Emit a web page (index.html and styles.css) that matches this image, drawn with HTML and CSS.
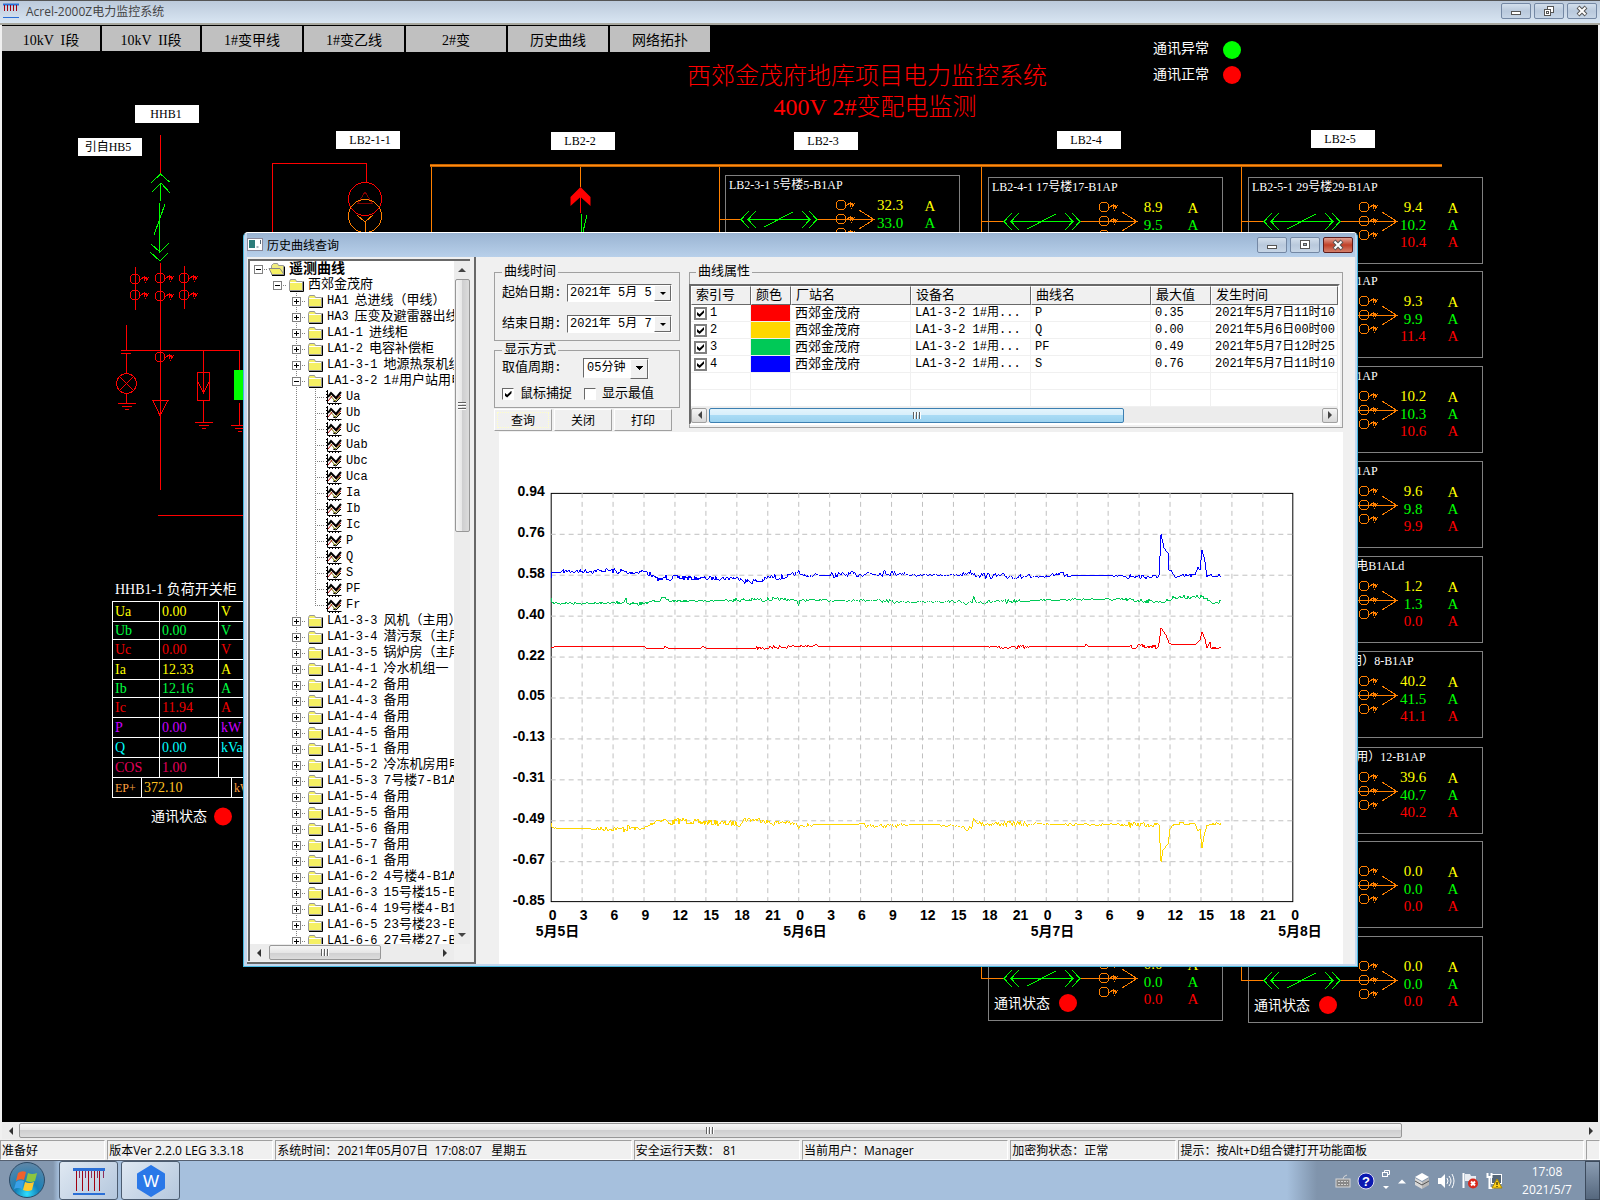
FILE: index.html
```html
<!DOCTYPE html>
<html lang="zh-CN">
<head>
  <meta charset="UTF-8" />
  <meta name="viewport" content="width=device-width, initial-scale=1.0"/>
  <title>Acrel-2000Z电力监控系统</title>
  <link rel="stylesheet" href="styles.css">
</head>
<body>

  <header class="app-title">
    <svg class="app-logo" width="18" height="16" viewBox="0 0 18 16">
      <path d="M1 1.500h16" stroke="#2a6fd6" stroke-width="2"/>
      <path d="M2.500 2v6M5.500 2v6M8.500 2v6M11.500 2v6M14.500 2v6" stroke="#a00010"/>
      <path d="M1 14.500h16" stroke="#2a6fd6"/>
    </svg>
    <span>Acrel-2000Z电力监控系统</span>
    <div class="win-buttons">
      <button aria-label="最小化"><svg width="12" height="12"><rect x="1.500" y="6.500" width="9" height="3" fill="#fff" stroke="#555"/></svg></button>
      <button aria-label="还原"><svg width="12" height="12" fill="#fff" stroke="#555"><rect x="4.500" y="1.500" width="6" height="6"/><rect x="1.500" y="4.500" width="6" height="6"/><rect x="3.500" y="6.500" width="2" height="2"/></svg></button>
      <button aria-label="关闭"><svg width="12" height="12"><path d="M2 2l8 8M10 2l-8 8" stroke="#555" stroke-width="4"/><path d="M2.500 2.500l7 7M9.500 2.500l-7 7" stroke="#fff" stroke-width="2"/></svg></button>
    </div>
  </header>

  <main class="workspace">
    <svg class="diagram" id="diagram" width="1600" height="1098" viewBox="0 25 1600 1098">
      <defs>
        <g id="ct">
          <circle r="5" fill="none"/>
          <path d="M5 1l4-3v4l2-4v4l3-4" fill="none"/>
        </g>
        <g id="ground">
          <path d="M-9 0h18M-5 3h10M-2 6h4"/>
        </g>
      </defs>

      <!-- headings -->
      <text class="big" x="867" y="84">西郊金茂府地库项目电力监控系统</text>
      <text class="big" x="875" y="115">400V 2#变配电监测</text>
      <g class="comm">
        <text x="1153" y="53">通讯异常</text>
        <circle cx="1232" cy="50" r="9" fill="#0f0"/>
        <text x="1153" y="79">通讯正常</text>
        <circle cx="1232" cy="75" r="9" fill="#f00"/>
      </g>

      <!-- white name plates -->
      <g fill="#fff">
        <rect x="135" y="105" width="64" height="18"/>
        <rect x="78" y="138" width="64" height="18"/>
        <rect x="336" y="131" width="64" height="18"/>
        <rect x="551" y="132" width="64" height="18"/>
        <rect x="794" y="132" width="64" height="18"/>
        <rect x="1057" y="131" width="64" height="18"/>
        <rect x="1311" y="130" width="64" height="18"/>
      </g>
      <g class="plate">
        <text x="166" y="118">HHB1</text>
        <text x="108" y="151">引自HB5</text>
        <text x="370" y="144">LB2-1-1</text>
        <text x="580" y="145">LB2-2</text>
        <text x="823" y="145">LB2-3</text>
        <text x="1086" y="144">LB2-4</text>
        <text x="1340" y="143">LB2-5</text>
      </g>

      <!-- incoming line HHB1 -->
      <g class="wire red">
        <path d="M160.500 135v40M160.500 263v227M135.500 267v43M184.500 266v43"/>
        <use href="#ct" x="135" y="279"/><use href="#ct" x="135" y="295"/>
        <use href="#ct" x="160" y="278"/><use href="#ct" x="160" y="296"/>
        <use href="#ct" x="184" y="278"/><use href="#ct" x="184" y="295"/>
        <use href="#ct" x="160" y="357"/>
        <path d="M121 350.500h118.500v19M126.500 325v25M121 353.500h10M126.500 353v20M126.500 394v9"/>
        <circle cx="126.500" cy="383.500" r="10"/>
        <path d="M120 377l13 13M133 377l-13 13"/>
        <use href="#ground" x="126.500" y="403.500"/>
        <path d="M153 400.500h15l-8 15z"/>
        <path d="M203.500 351v41M197.500 372.500h12v28h-12zM198 382l5.500 11l5.500-11M203.500 401v21"/>
        <use href="#ground" x="203.500" y="422.500"/>
        <path d="M239.500 403v22M158 515.500h90"/>
        <use href="#ground" x="239.500" y="425.500"/>
      </g>
      <rect x="234" y="370" width="12" height="30" fill="#0f0"/>
      <g class="wire green">
        <path d="M151 183l9.500-9l9 8M152 192l9-9l9 10M160.500 183v18M159.500 203v50M165 204l-11 31M151 244l9 8l9-9M150 252l10 9l8-8"/>
      </g>

      <!-- transformer -->
      <g class="wire red">
        <path d="M272.500 240v-76.500h94V182"/>
        <circle cx="365" cy="199" r="16.500"/>
        <path d="M365 192l7 11h-14z" stroke="#800000"/>
      </g>
      <g class="wire orange">
        <circle cx="365" cy="216" r="16.500"/>
        <path d="M357 215l8 7l8-7M365.500 222v18"/>
        <path d="M431.500 167v75M580.500 167v20M719.500 167v75M981.500 167v812M1241.500 167v813"/>
        <path d="M430 165.500h1012" stroke="#c86400" stroke-width="3"/>
        <path d="M430 165.500h1012" stroke="#ff8a10"/>
      </g>
      <path d="M580.500 187l10 10v9l-10-9l-10 9v-9z" fill="#f00"/>
      <path class="wire red" d="M580.500 195v18"/>
      <path class="wire green" d="M581.500 214v26M587 215l-6 25"/>

      <g id="feeders"></g>

      <text class="sub" x="115" y="594">HHB1-1 负荷开关柜</text>
      <g class="comm">
        <text x="151" y="821">通讯状态</text>
        <circle cx="223" cy="816.500" r="9" fill="#f00"/>
      </g>
    </svg>

    <nav class="pages">
      <button>10kV  I段</button>
      <button>10kV  II段</button>
      <button>1#变甲线</button>
      <button>1#变乙线</button>
      <button>2#变</button>
      <button>历史曲线</button>
      <button>网络拓扑</button>
    </nav>

    <div class="meter">
      <table class="meter-table">
        <tr class="c-a"><td>Ua</td><td>0.00</td><td>V</td></tr>
        <tr class="c-b"><td>Ub</td><td>0.00</td><td>V</td></tr>
        <tr class="c-c"><td>Uc</td><td>0.00</td><td>V</td></tr>
        <tr class="c-a"><td>Ia</td><td>12.33</td><td>A</td></tr>
        <tr class="c-b"><td>Ib</td><td>12.16</td><td>A</td></tr>
        <tr class="c-c"><td>Ic</td><td>11.94</td><td>A</td></tr>
        <tr class="c-p"><td>P</td><td>0.00</td><td>kW</td></tr>
        <tr class="c-q"><td>Q</td><td>0.00</td><td>kVar</td></tr>
        <tr class="c-cos"><td>COS</td><td>1.00</td><td></td></tr>
      </table>
      <table class="meter-table energy">
        <tr><td>EP+</td><td>372.10</td><td>kWh</td></tr>
      </table>
    </div>

    <section class="dialog">
      <header class="dialog-title">
        <svg width="16" height="13" viewBox="0 0 16 13"><rect x=".5" y=".5" width="15" height="12" fill="#fff" stroke="#889"/><rect x="2" y="2" width="6" height="8" fill="#2c7d7a"/><path d="M9.500 9h2M13.500 2v4" stroke="#567"/></svg>
        <h2>历史曲线查询</h2>
        <div class="win-buttons">
          <button aria-label="最小化"><svg width="12" height="12"><rect x="1.500" y="6.500" width="9" height="3" fill="#fff" stroke="#555"/></svg></button>
          <button aria-label="最大化"><svg width="12" height="12"><rect x="1.500" y="1.500" width="9" height="8" fill="#fff" stroke="#555"/><rect x="4.500" y="4.500" width="3" height="2" fill="#9ab" stroke="#555"/></svg></button>
          <button class="close" aria-label="关闭"><svg width="12" height="12"><path d="M2 2l8 8M10 2l-8 8" stroke="#555" stroke-width="4"/><path d="M2.500 2.500l7 7M9.500 2.500l-7 7" stroke="#fff" stroke-width="2"/></svg></button>
        </div>
      </header>

      <div class="dialog-body">
        <aside class="tree-pane">
          <div class="tree-main">
            <ul class="tree" id="tree"></ul>
            <div class="scroll-v">
              <svg width="8" height="5"><path d="M0 5l4-4l4 4z" fill="#444"/></svg>
              <div class="thumb"><i class="grip"></i></div>
              <svg width="8" height="5"><path d="M0 0l4 4l4-4z" fill="#444"/></svg>
            </div>
          </div>
          <div class="scroll-h">
            <svg width="5" height="8"><path d="M5 0l-4 4l4 4z" fill="#333"/></svg>
            <div class="track"><div class="thumb"><i class="grip"></i></div></div>
            <svg width="5" height="8"><path d="M0 0l4 4l-4 4z" fill="#333"/></svg>
          </div>
        </aside>

        <div class="query-pane">
          <div class="query-top">
            <form class="query-form" onsubmit="return false">
              <fieldset class="time-set">
                <legend>曲线时间</legend>
                <div class="field">
                  <label for="startDate">起始日期:</label>
                  <div class="date-box"><input type="text" id="startDate" value="2021年 5月 5"><button type="button" aria-label="选择起始日期">
                    <svg width="6" height="3"><path d="M0 0h6l-3 3z"/></svg></button></div>
                </div>
                <div class="field">
                  <label for="endDate">结束日期:</label>
                  <div class="date-box"><input type="text" id="endDate" value="2021年 5月 7"><button type="button" aria-label="选择结束日期">
                    <svg width="6" height="3"><path d="M0 0h6l-3 3z"/></svg></button></div>
                </div>
              </fieldset>
              <fieldset class="mode-set">
                <legend>显示方式</legend>
                <div class="field">
                  <label for="period">取值周期:</label>
                  <div class="select-box">
                    <select id="period"><option>05分钟</option><option>15分钟</option></select>
                  </div>
                </div>
                <div class="checks">
                  <label><input type="checkbox" checked>鼠标捕捉</label>
                  <label><input type="checkbox">显示最值</label>
                </div>
              </fieldset>
              <div class="actions">
                <button class="default">查询</button>
                <button>关闭</button>
                <button>打印</button>
              </div>
            </form>

            <fieldset class="curve-set">
              <legend>曲线属性</legend>
              <div class="list">
                <table>
                  <colgroup><col class="w60"><col class="w40"><col class="w120"><col class="w120"><col class="w120"><col class="w60"><col></colgroup>
                  <thead>
                    <tr><th>索引号</th><th>颜色</th><th>厂站名</th><th>设备名</th><th>曲线名</th><th>最大值</th><th>发生时间</th></tr>
                  </thead>
                  <tbody id="curveRows"></tbody>
                </table>
                <div class="scroll-h blue">
                  <span class="arrow"><svg width="5" height="8"><path d="M5 0l-4 4l4 4z" fill="#444"/></svg></span>
                  <div class="track"><div class="thumb"><i class="grip"></i></div></div>
                  <span class="arrow"><svg width="5" height="8"><path d="M0 0l4 4l-4 4z" fill="#444"/></svg></span>
                </div>
              </div>
            </fieldset>
          </div>

          <svg class="chart" id="chart" viewBox="0 0 844 533"></svg>
        </div>
      </div>
    </section>
  </main>

  <div class="scroll-h page-scroll">
    <svg width="5" height="8"><path d="M5 0l-4 4l4 4z" fill="#333"/></svg>
    <div class="track"><div class="thumb"><i class="grip"></i></div></div>
    <svg width="5" height="8"><path d="M0 0l4 4l-4 4z" fill="#333"/></svg>
  </div>

  <footer class="status">
    <span>准备好</span>
    <span>版本Ver 2.2.0 LEG 3.3.18</span>
    <span>系统时间：2021年05月07日  17:08:07   星期五</span>
    <span>安全运行天数： 81</span>
    <span>当前用户：Manager</span>
    <span>加密狗状态：正常</span>
    <span>提示：按Alt+D组合键打开功能面板</span>
    <span></span>
  </footer>

  <div class="taskbar">
    <button class="start" aria-label="开始">
      <svg width="38" height="38" viewBox="0 0 38 38">
        <defs><radialGradient id="orb" cx="50%" cy="90%" r="85%"><stop offset="0" stop-color="#2fe0ff"/><stop offset=".4" stop-color="#1480b8"/><stop offset="1" stop-color="#5b86a8"/></radialGradient></defs>
        <circle cx="19" cy="19" r="17.500" fill="url(#orb)" stroke="#2c4a66"/>
        <path d="M10 12q4-3 8-1l-2 8q-4-2-8 1z" fill="#f0612c"/>
        <path d="M20 12q4 2 9 0l-2 8q-4 2-9 0z" fill="#8cc63f"/>
        <path d="M8 21q4-3 8-1l-2 8q-4-2-8 0z" fill="#39a0e8"/>
        <path d="M17 21q4 2 9 0l-2 8q-4 2-9 0z" fill="#fdc92e"/>
      </svg>
    </button>
    <button class="task" aria-label="Acrel-2000Z">
      <svg width="34" height="28" viewBox="0 0 34 28">
        <path d="M1 2.500h32" stroke="#2a6fd6" stroke-width="3"/>
        <path d="M4.500 4v20M10.500 4v20M16.500 4v20M22.500 4v20M27.500 4v20" stroke="#a00010"/>
        <path d="M7.500 4v7M13.500 4v7M19.500 4v7M25.500 4v7M31.500 4v7" stroke="#8b2c5c"/>
        <path d="M1 27h32" stroke="#2a6fd6" stroke-width="2"/>
      </svg>
    </button>
    <button class="task" aria-label="WPS">
      <svg width="30" height="32" viewBox="0 0 30 32">
        <path d="M15 1l13 8v14l-13 8l-13-8v-14z" fill="#2a78e8" stroke="#2a78e8" stroke-width="2" stroke-linejoin="round"/>
        <text x="15" y="22" text-anchor="middle" font-family="Liberation Sans" font-size="17" fill="#fff">W</text>
      </svg>
    </button>
    <div class="tray">
      <svg width="16" height="14" fill="none" stroke="#d5d5d5"><rect x="1" y="5" width="14" height="8" fill="#888"/><path d="M3 7.500h10M3 10.500h10" stroke-dasharray="2 1"/><path d="M8 5q0-3 4-4"/></svg>
      <svg width="18" height="18"><circle cx="9" cy="9" r="8" fill="#0a18b0" stroke="#dde"/><text x="9" y="14" text-anchor="middle" font-family="Liberation Sans" font-weight="bold" font-size="13" fill="#fff">?</text></svg>
      <svg class="lang" width="10" height="22" fill="none" stroke="#fff"><path d="M3.500 3.500v-2h5v4h-2"/><rect x="1.500" y="3.500" width="5" height="4"/><path d="M2 17h6l-3 3z" fill="#fff" stroke="none"/></svg>
      <svg class="up" width="10" height="6"><path d="M1 5.500l4-4l4 4z" fill="#fff"/></svg>
      <svg width="18" height="18"><path d="M9 1l7 4l-7 4l-7-4z" fill="#fff"/><path d="M2 6l7 4v7l-7-4z" fill="#d8d8d8"/><path d="M16 6l-7 4v7l7-4z" fill="#b8b8b8"/><path d="M2 9l7 4l7-4" fill="none" stroke="#555"/></svg>
      <svg width="18" height="16"><path d="M1 5h3l4-4v14l-4-4h-3z" fill="#fff"/><path d="M10 5q2 3 0 6M12 3q4 5 0 10M15 1q4 7 0 14" fill="none" stroke="#fff"/></svg>
      <svg width="18" height="17"><path d="M2.500 1v15" stroke="#fff" stroke-width="2"/><path d="M4 2h5l1 2h5v7h-6l-1-2h-4z" fill="#e8ecf2"/><circle cx="12" cy="11.500" r="5" fill="#d8281c"/><path d="M10 9.500l4 4M14 9.500l-4 4" stroke="#fff" stroke-width="2"/></svg>
      <svg width="18" height="17"><rect x="6.500" y="2.500" width="10" height="9" fill="#567" stroke="#fff"/><path d="M2.500 1v4h4v-4M4.500 5v11h4" fill="none" stroke="#fff" stroke-width="2"/><path d="M12 7l5 9h-10z" fill="#ffd21c" stroke="#a80"/><path d="M12 10v3M12 14v1" stroke="#000"/></svg>
      <time>17:08<br>2021/5/7</time>
    </div>
    <button class="show-desktop" aria-label="显示桌面"></button>
  </div>

  <script>
    const feeders = [
      { x: 725, y: 175, bus: 719, name: "LB2-3-1 5号楼5-B1AP", v: ["32.3", "33.0", "32.1"] },
      { x: 988, y: 177, bus: 981, name: "LB2-4-1 17号楼17-B1AP", v: ["8.9", "9.5", "9.7"] },
      { x: 988, y: 934, bus: 981, name: "", v: ["0.0", "0.0", "0.0"], status: true },
      { x: 1248, y: 177, bus: 1241, name: "LB2-5-1 29号楼29-B1AP", v: ["9.4", "10.2", "10.4"] },
      { x: 1248, y: 271, bus: 1241, name: "LB2-5-2 30号楼30-B1AP", v: ["9.3", "9.9", "11.4"] },
      { x: 1248, y: 366, bus: 1241, name: "LB2-5-3 31号楼31-B1AP", v: ["10.2", "10.3", "10.6"] },
      { x: 1248, y: 461, bus: 1241, name: "LB2-5-4 32号楼32-B1AP", v: ["9.6", "9.8", "9.9"] },
      { x: 1248, y: 556, bus: 1241, name: "LB2-5-5 地下车库用电B1ALd", v: ["1.2", "1.3", "0.0"] },
      { x: 1248, y: 651, bus: 1241, name: "LB2-5-6 8号楼（备用）8-B1AP", v: ["40.2", "41.5", "41.1"] },
      { x: 1248, y: 747, bus: 1241, name: "LB2-5-7 12号楼（备用）12-B1AP", v: ["39.6", "40.7", "40.2"] },
      { x: 1248, y: 841, bus: 1241, name: "LB2-5-8 备用", v: ["0.0", "0.0", "0.0"] },
      { x: 1248, y: 936, bus: 1241, name: "LB2-5-9 备用", v: ["0.0", "0.0", "0.0"], status: true }
    ];

    const curves = [
      ["#ff0000", "P", "0.35", "2021年5月7日11时10"],
      ["#ffd700", "Q", "0.00", "2021年5月6日00时00"],
      ["#00c957", "PF", "0.49", "2021年5月7日12时25"],
      ["#0000ff", "S", "0.76", "2021年5月7日11时10"]
    ];

    // [level, code, name]
    const nodes = [
      [0, "", "遥测曲线"], [1, "", "西郊金茂府"],
      [2, "HA1", "总进线（甲线）"], [2, "HA3", "压变及避雷器出线柜"],
      [2, "LA1-1", "进线柜"], [2, "LA1-2", "电容补偿柜"],
      [2, "LA1-3-1", "地源热泵机组"], [2, "LA1-3-2", "1#用户站用电"],
      ...["Ua", "Ub", "Uc", "Uab", "Ubc", "Uca", "Ia", "Ib", "Ic", "P", "Q", "S", "PF", "Fr"].map(n => [3, n, ""]),
      [2, "LA1-3-3", "风机（主用）"], [2, "LA1-3-4", "潜污泵（主用）"], [2, "LA1-3-5", "锅炉房（主用）"],
      [2, "LA1-4-1", "冷水机组一"], [2, "LA1-4-2", "备用"], [2, "LA1-4-3", "备用"],
      [2, "LA1-4-4", "备用"], [2, "LA1-4-5", "备用"], [2, "LA1-5-1", "备用"],
      [2, "LA1-5-2", "冷冻机房用电"], [2, "LA1-5-3", "7号楼7-B1AP"], [2, "LA1-5-4", "备用"],
      [2, "LA1-5-5", "备用"], [2, "LA1-5-6", "备用"], [2, "LA1-5-7", "备用"], [2, "LA1-6-1", "备用"],
      [2, "LA1-6-2", "4号楼4-B1AP"], [2, "LA1-6-3", "15号楼15-B"], [2, "LA1-6-4", "19号楼4-B1AP"],
      [2, "LA1-6-5", "23号楼23-B"], [2, "LA1-6-6", "27号楼27-B"]
    ];

    function renderFeeders() {
      document.getElementById("feeders").innerHTML = feeders.map(f => {
        const colors = ["#ff0", "#0f0", "#f00"];
        const values = f.v.map((val, i) => `
          <text class="val" x="165" y="${[35, 53, 70][i]}" fill="${colors[i]}">${val}</text>
          <text class="val" x="205" y="${[36, 53, 70][i]}" fill="${colors[i]}">A</text>`).join("");
        const status = f.status ? `<g class="comm"><text x="6" y="74">通讯状态</text><circle cx="80" cy="69" r="9" fill="#f00"/></g>` : "";
        return `<g transform="translate(${f.x} ${f.y})">
          <rect class="frame" x=".5" y=".5" width="234" height="86"/>
          <text class="name" x="4" y="14">${f.name}</text>
          <path class="wire orange" d="M${f.bus - f.x} 44.500H16M92 44.500h56M134 35l15 9.500l-15 9.500"/>
          <path class="wire green" d="M24 36l-8 8.500l8 8.500M31 36l-8 8.500l8 8.500M23 44.500h62M39 52l29-15M77 36l8 8.500l-8 8.500M84 36l8 8.500l-8 8.500"/>
          <g class="wire orange"><use href="#ct" x="116" y="30"/><use href="#ct" x="116" y="44"/><use href="#ct" x="116" y="58"/></g>
          ${values}${status}</g>`;
      }).join("");
    }

    const folder = `<svg class="icon" width="18" height="15"><path d="M2.500 12.500v-9l1-2h5l1 2h6v9z" fill="#f5f064" stroke="#999"/><path d="M3 4.500h12" stroke="#fff"/><path d="M3 13.500h13.500v-10" fill="none" stroke="#000"/></svg>`;
    const folderOpen = `<svg class="icon" width="18" height="15"><path d="M3.500 12.500v-9l2-2h4l1 2h5v9z" fill="#f0ec80" stroke="#999"/><path d="M4 12.500l-3-6h11l4 6z" fill="#f5f064" stroke="#888"/><path d="M4 13.500h12.500v-9" fill="none" stroke="#000"/></svg>`;
    const leaf = `<svg class="icon" width="18" height="16" fill="none"><path d="M2.500 1v13.500h14" stroke="#000"/><path d="M1 2.500h1M1 5.500h1M1 8.500h1M1 11.500h1M4.500 15v1M7.500 15v1M10.500 15v1M13.500 15v1" stroke="#000"/><path d="M4 5l6 7l5-4" stroke="#808000"/><path d="M3 12l5-6l3 4l5-4" stroke="#a00000"/><path d="M3 8l3-4l5 5l5-6" stroke="#000" stroke-width="2"/><path d="M8 12l3 1l5-5" stroke="#000"/></svg>`;

    function renderTree() {
      document.getElementById("tree").innerHTML = nodes.map(([level, code, name], i) => {
        let cells = "";
        for (let k = 0; k < level; k++) cells += `<span class="cell ${k === 2 ? "line" : ""}"></span>`;
        const open = level < 2 || code === "LA1-3-2";
        const box = level === 3 ? "" : `<button class="expander" aria-label="展开">${open ? "" : "<i></i>"}</button>`;
        const kind = level < 2 ? "branch" : code === "Fr" ? "branch last" : "branch line";
        const icon = level === 3 ? leaf : level === 0 ? folderOpen : folder;
        return `<li class="lv${level}">${cells}<span class="cell ${kind}">${box}</span>${icon}<span class="code">${code}</span><span class="label">${name}</span></li>`;
      }).join("");
    }

    function renderCurveRows() {
      let html = curves.map((c, i) => `<tr>
        <td><label><input type="checkbox" checked>${i + 1}</label></td>
        <td style="background:${c[0]}"></td><td class="site">西郊金茂府</td><td>LA1-3-2 1#用...</td>
        <td>${c[1]}</td><td>${c[2]}</td><td>${c[3]}</td></tr>`).join("");
      const empty = "<tr>" + "<td></td>".repeat(7) + "</tr>";
      document.getElementById("curveRows").innerHTML = html + empty + empty;
    }

    // control points [x, y, noise] in plot pixels, one sample per pixel
    const series = [
      { color: "#ffd700", pts: [[0, 330, 0], [1, 335, 1], [10, 336, 1], [40, 336, 0], [68, 336, 2], [70, 336, 3], [80, 335, 4], [93, 336, 2], [105, 328, 2], [115, 327, 2], [118, 331, 2], [130, 327, 3], [140, 329, 3], [190, 331, 3], [193, 327, 2], [212, 327, 3], [220, 331, 3], [232, 329, 3], [246, 332, 2], [248, 336, 0], [250, 332, 0], [262, 332, 2], [308, 332, 0], [318, 333, 2], [355, 333, 2], [360, 332, 0], [390, 332, 0], [412, 333, 2], [417, 338, 1], [422, 333, 2], [423, 325, 0], [428, 331, 2], [480, 331, 3], [530, 332, 1], [578, 332, 1], [608, 331, 3], [609, 332, 0], [611, 369, 0], [613, 357, 0], [618, 351, 0], [620, 336, 0], [624, 331, 1], [645, 331, 2], [648, 338, 0], [650, 336, 0], [652, 355, 0], [654, 343, 0], [657, 332, 0], [660, 332, 2], [671, 330, 2]] },
      { color: "#ff0000", pts: [[0, 154, 1], [6, 153, 0], [93, 153, 0], [95, 155, 0], [113, 155, 0], [114, 153, 0], [117, 155, 0], [150, 155, 0], [152, 153, 0], [155, 155, 0], [205, 155, 0], [225, 154, 2], [240, 153, 2], [262, 153, 1], [265, 151, 0], [267, 153, 0], [438, 153, 0], [440, 154, 1], [478, 154, 2], [480, 153, 0], [535, 153, 0], [536, 151, 0], [538, 153, 0], [578, 153, 0], [608, 154, 2], [609, 150, 0], [611, 135, 0], [616, 142, 0], [619, 150, 0], [622, 151, 0], [646, 151, 0], [650, 147, 0], [652, 139, 0], [655, 146, 0], [657, 155, 0], [660, 149, 0], [661, 155, 0], [671, 155, 1]] },
      { color: "#00c957", pts: [[0, 105, 0], [1, 110, 1], [60, 110, 1], [73, 109, 2], [75, 105, 0], [76, 110, 1], [92, 111, 2], [103, 107, 1], [115, 106, 2], [120, 108, 2], [180, 107, 1], [240, 106, 2], [246, 107, 0], [248, 113, 0], [249, 107, 1], [330, 107, 1], [345, 109, 2], [410, 108, 1], [416, 112, 2], [422, 109, 2], [423, 103, 0], [426, 109, 2], [470, 108, 2], [490, 107, 0], [530, 106, 1], [560, 106, 1], [600, 108, 2], [615, 109, 1], [625, 104, 2], [652, 104, 2], [658, 108, 5], [664, 110, 2], [671, 107, 2]] },
      { color: "#0000ff", pts: [[0, 85, 0], [0, 79, 0], [10, 79, 0], [11, 78, 1], [40, 78, 2], [57, 77, 2], [68, 79, 3], [78, 80, 5], [93, 78, 2], [100, 82, 3], [105, 85, 2], [111, 87, 2], [113, 84, 1], [135, 85, 3], [190, 85, 2], [193, 88, 2], [210, 88, 3], [218, 84, 2], [235, 84, 3], [246, 80, 2], [248, 77, 0], [250, 82, 0], [262, 83, 2], [265, 80, 0], [268, 82, 0], [280, 82, 0], [310, 81, 3], [316, 80, 3], [355, 80, 3], [358, 82, 0], [412, 82, 1], [418, 79, 3], [428, 82, 3], [480, 84, 3], [500, 83, 1], [508, 80, 2], [522, 82, 3], [555, 82, 0], [575, 83, 1], [608, 84, 3], [609, 82, 0], [611, 41, 0], [614, 55, 0], [618, 60, 0], [619, 77, 0], [621, 77, 0], [625, 84, 0], [645, 82, 2], [648, 74, 0], [650, 77, 0], [652, 57, 0], [655, 68, 0], [657, 84, 0], [660, 82, 2], [671, 83, 2]] }
    ];

    function tracePath(pts) {
      let seed = 7;
      const rand = () => (seed = (seed * 16807) % 2147483647) / 2147483647 - 0.5;
      let d = `M${pts[0][0]} ${pts[0][1]}`;
      for (let i = 1; i < pts.length; i++) {
        const [x0, y0] = pts[i - 1], [x1, y1, n] = pts[i];
        for (let x = x0 + 1; x < x1; x++) {
          const y = y0 + (y1 - y0) * (x - x0) / (x1 - x0) + (n ? rand() * n * 2 : 0);
          d += `L${x} ${Math.round(y)}`;
        }
        d += `L${x1} ${y1}`;
      }
      return d;
    }

    function renderChart() {
      const labels = ["0.94", "0.76", "0.58", "0.40", "0.22", "0.05", "-0.13", "-0.31", "-0.49", "-0.67", "-0.85"];
      let grid = "", text = "";
      labels.forEach((l, i) => {
        if (i > 0 && i < 10) grid += `M0 ${i * 41}.5H743`;
        text += `<text x="-6" y="${i * 41 + 3}" text-anchor="end">${l}</text>`;
      });
      for (let i = 0; i <= 24; i++) {
        if (i > 0 && i < 24) grid += `M${i * 31}.5 0V409`;
        text += `<text x="${i * 31 - 2}" y="428">${(i * 3) % 24}</text>`;
        if (i % 8 === 0) text += `<text x="${i * 31 - 15}" y="444">5月${5 + i / 8}日</text>`;
      }
      document.getElementById("chart").innerHTML = `<g transform="translate(51 61)">
        <rect x=".5" y=".5" width="743" height="409" fill="none" stroke="#000"/>
        <path d="${grid}" stroke="#c0c0c0" stroke-dasharray="5 4"/>${text}
        <g transform="translate(.5 .5)">${series.map(s => `<path class="trace" d="${tracePath(s.pts)}" stroke="${s.color}"/>`).join("")}</g></g>`;
    }

    renderFeeders();
    renderTree();
    renderCurveRows();
    renderChart();
  </script>

</body>
</html>
```
FILE: styles.css
```css
:root {
  --face: #f0f0f0;
  --shadow: #a0a0a0;
  --dark: #696969;
  --sans: "Open Sans", "Noto Sans CJK SC", sans-serif;
  --serif: "Liberation Serif", "Noto Sans CJK SC", serif;
  --mono: "Liberation Mono", "Noto Sans CJK SC", monospace;
}

* {
  box-sizing: border-box;
}

body {
  margin: 0;
  height: 100vh;
  display: flex;
  flex-direction: column;
  overflow: hidden;
  background: var(--face);
  font-family: var(--sans);
  font-size: 12px;
  color: #000;
}

button {
  padding: 0;
  font: inherit;
  color: inherit;
}

/* main window */
.app-title {
  height: 25px;
  flex: none;
  display: flex;
  align-items: center;
  gap: 6px;
  padding: 0 3px 2px 2px;
  border-top: 1px solid #555;
  border-bottom: 2px solid #a8a8a0;
  background: linear-gradient(#bccadb, #d8e5f2);
  color: #444;
}

.win-buttons {
  margin-left: auto;
  display: flex;
  gap: 3px;
}

.win-buttons button {
  width: 30px;
  height: 16px;
  display: flex;
  align-items: center;
  justify-content: center;
  border: 1px solid #7488a4;
  border-radius: 2px;
  background: linear-gradient(#d3dfec, #b9c9dc 50%, #c6d5e6);
}

.win-buttons .close {
  border-color: #5c1c1c;
  background: linear-gradient(#e0a294, #c04028 50%, #d4806c);
}

.workspace {
  position: relative;
  flex: 1;
  min-height: 0;
  overflow: hidden;
  background: #000;
  border-left: 2px solid var(--face);
  border-right: 2px solid var(--face);
}

.diagram {
  position: absolute;
  left: -2px;
  top: 0;
}

.pages {
  position: relative;
  display: flex;
  gap: 2px;
  padding-top: 1px;
}

.pages button {
  width: 100px;
  height: 26px;
  border: 0;
  background: #c0c0c0;
  font-family: var(--serif);
  font-size: 14px;
  white-space: pre;
}

.pages button:nth-child(-n+2) {
  width: 98px;
  height: 25px;
}

/* diagram text and lines */
.diagram text {
  font-family: var(--serif);
}

.diagram .big {
  font-size: 24px;
  font-weight: 300;
  fill: #f00;
  text-anchor: middle;
}

.diagram .comm text,
.diagram .sub {
  font-size: 14px;
  fill: #fff;
}

.diagram .plate text {
  font-size: 12px;
  text-anchor: middle;
}

.diagram .name {
  font-size: 12px;
  fill: #fff;
}

.diagram .val {
  font-size: 15px;
  text-anchor: middle;
}

.wire {
  fill: none;
  stroke-width: 1;
  shape-rendering: crispEdges;
}

.red { stroke: #f00; }
.green { stroke: #0f0; }
.orange { stroke: #ff8000; }

.frame {
  fill: none;
  stroke: #808080;
}

.meter {
  position: absolute;
  left: 110px;
  top: 576px;
  width: 150px;
  font-family: var(--serif);
  font-size: 14px;
}

.meter-table {
  width: 100%;
  border-collapse: collapse;
  table-layout: fixed;
}

.meter-table td {
  height: 20px;
  padding: 1px 2px 0;
  border: 1px solid #fff;
  line-height: 16px;
  white-space: nowrap;
}

.meter-table tr:nth-child(3n+2) td {
  height: 18px;
}

.meter-table tr:nth-child(8) td {
  height: 20px;
}

.meter-table td:nth-child(1) { width: 47px; }
.meter-table td:nth-child(2) { width: 59px; }

.energy {
  margin-top: -1px;
  color: #ffa040;
}

.energy td:nth-child(1) { width: 29px; font-size: 12px; }
.energy td:nth-child(2) { width: 90px; color: #ffc020; }
.energy td:nth-child(3) { font-size: 12px; }

.c-a { color: #ff0; }
.c-b { color: #00ff40; }
.c-c { color: #f00000; }
.c-p { color: #c0f; }
.c-q { color: #0ff; }
.c-cos { color: #e6005c; }

/* history curve window */
.dialog {
  position: absolute;
  left: 241px;
  top: 207px;
  width: 1115px;
  height: 735px;
  display: flex;
  flex-direction: column;
  padding: 0 2px 2px 3px;
  border: 1px solid #48b8e0;
  border-top-color: #fff;
  border-radius: 5px 5px 0 0;
  background: #c4d8ee;
}

.dialog-title {
  flex: none;
  height: 24px;
  display: flex;
  align-items: center;
  gap: 4px;
  padding: 0 2px 1px 0;
  background: linear-gradient(#9ab4d2, #b8d0ea);
}

.dialog-title h2 {
  margin: 0;
  font-size: 12px;
  font-weight: normal;
}

.dialog-body {
  flex: 1;
  min-height: 0;
  display: flex;
  background: var(--face);
  font-family: var(--mono);
}

.tree-pane {
  width: 229px;
  flex: none;
  display: flex;
  flex-direction: column;
  padding: 2px 4px 1px 1px;
  border-right: 2px solid var(--dark);
  border-bottom: 2px solid var(--dark);
}

.tree-main {
  flex: 1;
  min-height: 0;
  display: flex;
  border-top: 2px solid var(--dark);
  border-left: 2px solid var(--dark);
}

.tree {
  flex: 1;
  min-width: 0;
  margin: 0;
  padding: 0;
  overflow: hidden;
  list-style: none;
  background: #fff;
}

.tree li {
  height: 16px;
  margin-left: -1px;
  display: flex;
  align-items: center;
  line-height: 16px;
  white-space: pre;
}

.tree .code {
  font-size: 12px;
}

.tree .label {
  font-size: 13px;
}

.lv2 .label {
  margin-left: 6px;
}

.lv0 .label {
  font-weight: bold;
  font-size: 14px;
}

.cell {
  width: 19px;
  height: 16px;
  flex: none;
  display: flex;
  align-items: center;
  justify-content: center;
}

.line {
  background: repeating-linear-gradient(#808080 0 1px, transparent 1px 2px) 9px 0 / 1px 16px no-repeat;
}

.branch {
  background: repeating-linear-gradient(90deg, #808080 0 1px, transparent 1px 2px) 9px 8px / 10px 1px no-repeat;
}

.branch.line,
.branch.last {
  background: repeating-linear-gradient(#808080 0 1px, transparent 1px 2px) 9px 0 / 1px 16px no-repeat,
    repeating-linear-gradient(90deg, #808080 0 1px, transparent 1px 2px) 9px 8px / 10px 1px no-repeat;
}

.branch.last {
  background-size: 1px 8px, 10px 1px;
}

.expander {
  position: relative;
  width: 9px;
  height: 9px;
  border: 1px solid #808080;
  background: linear-gradient(#000, #000) center / 5px 1px no-repeat #fff;
}

.expander i {
  position: absolute;
  left: 3px;
  top: 1px;
  width: 1px;
  height: 5px;
  background: #000;
}

.icon {
  flex: none;
  margin-right: 3px;
}

/* scrollbars */
.scroll-v {
  width: 16px;
  display: flex;
  flex-direction: column;
  align-items: center;
  padding: 6px 0;
  background: #ececec;
}

.scroll-v .thumb {
  width: 15px;
  height: 253px;
  margin: 7px 0 auto;
}

.scroll-h {
  height: 17px;
  flex: none;
  display: flex;
  align-items: center;
  gap: 8px;
  padding: 0 8px;
  background: #ececec;
}

.scroll-h .track {
  flex: 1;
}

.thumb {
  display: flex;
  align-items: center;
  justify-content: center;
  border: 1px solid #979797;
  border-radius: 2px;
  background: linear-gradient(#f5f5f5, #e6e6e6 50%, #cfcfd0 50%, #dcdcdc);
}

.scroll-v .thumb {
  background: linear-gradient(90deg, #f5f5f5, #e6e6e6 50%, #cfcfd0 50%, #dcdcdc);
}

.scroll-h .thumb {
  height: 15px;
  width: 70%;
}

.grip {
  width: 8px;
  height: 7px;
  background: repeating-linear-gradient(90deg, #606060 0 1px, #fff 1px 2px, transparent 2px 3px);
}

.scroll-v .grip {
  height: 8px;
  background: repeating-linear-gradient(#606060 0 1px, #fff 1px 2px, transparent 2px 3px);
}

.tree-pane .scroll-h {
  margin-right: 16px;
  padding: 0 6px;
  border-left: 2px solid var(--dark);
}

.tree-pane .scroll-h .track .thumb {
  width: 112px;
}

.page-scroll {
  gap: 6px;
  padding: 0 6px;
  border-left: 2px solid var(--face);
}

.page-scroll .thumb {
  width: 88.4%;
}

/* query area */
.query-pane {
  flex: 1;
  min-width: 0;
  display: flex;
  flex-direction: column;
  padding: 7px 12px 0 18px;
}

.query-top {
  display: flex;
  gap: 9px;
  height: 168px;
}

fieldset {
  margin: 0;
  min-width: 0;
  border: 1px solid var(--shadow);
}

legend {
  padding: 0 2px;
  font-size: 13px;
  line-height: 16px;
}

.query-form {
  width: 186px;
  flex: none;
}

.time-set,
.mode-set {
  padding: 0 7px;
}

.time-set { height: 77px; }
.mode-set { height: 66px; margin-top: 1px; }

.field {
  display: flex;
  align-items: center;
}

.field label {
  width: 65px;
  flex: none;
  font-size: 13px;
  line-height: 18px;
}

.time-set .field {
  margin: 4px 0 13px;
}

.date-box {
  flex: 1;
  height: 18px;
  display: flex;
  border: 1px solid;
  border-color: var(--dark) #fff #fff var(--dark);
  background: #fff;
}

.date-box input {
  flex: 1;
  width: 0;
  padding: 1px 0 0 2px;
  border: 0;
  background: none;
  font: 12px/15px var(--mono);
}

.date-box button {
  width: 17px;
  display: flex;
  align-items: center;
  justify-content: center;
  border: 1px solid;
  border-color: #fff var(--dark) var(--dark) #fff;
  background: var(--face);
}

.select-box {
  position: relative;
  margin-left: 16px;
}

.select-box select {
  appearance: none;
  width: 66px;
  height: 20px;
  padding: 0 0 0 3px;
  border: 1px solid;
  border-color: var(--dark) #fff #fff var(--dark);
  border-radius: 0;
  background: #fff;
  color: #000;
  font: 12px/16px var(--mono);
}

.select-box::after {
  content: "";
  position: absolute;
  right: 1px;
  top: 1px;
  width: 16px;
  height: 18px;
  border: 1px solid;
  border-color: #fff var(--dark) var(--dark) #fff;
  background: conic-gradient(from -45deg at 50% 100%, #000 0 90deg, transparent 90deg) center 6px / 7px 4px no-repeat var(--face);
  pointer-events: none;
}

.checks {
  display: flex;
  gap: 12px;
  padding-top: 8px;
}

.checks label {
  display: flex;
  align-items: center;
  gap: 6px;
  font-size: 13px;
  line-height: 16px;
  white-space: nowrap;
}

input[type="checkbox"] {
  appearance: none;
  flex: none;
  width: 12px;
  height: 12px;
  margin: 0;
  display: grid;
  place-items: center;
  border: 1px solid;
  border-color: var(--dark) #fff #fff var(--dark);
  background: #fff;
}

input[type="checkbox"]:checked::before {
  content: "";
  width: 7px;
  height: 7px;
  background: #000;
  clip-path: polygon(0 30%, 38% 62%, 100% 0, 100% 40%, 38% 100%, 0 70%);
}

.actions {
  display: flex;
  gap: 2px;
  padding: 1px 8px 0 0;
}

.actions button {
  flex: 1;
  height: 22px;
  border: 1px solid;
  border-color: #fff var(--shadow) var(--shadow) #fff;
  background: var(--face);
  font-size: 12px;
}

.actions .default {
  outline: 1px dotted #ffffc8;
  outline-offset: -4px;
}

.curve-set {
  flex: 1;
  height: 164px;
  padding: 0 2px 0 0;
}

.curve-set legend {
  margin-left: 6px;
}

.list {
  margin: 4px 0 0 -1px;
  border: 2px solid;
  border-color: var(--dark) #fff #fff var(--dark);
  background: #fff;
  overflow: hidden;
}

.list table {
  width: 100%;
  border-collapse: separate;
  border-spacing: 0;
  table-layout: fixed;
}

.w40 { width: 40px; }
.w60 { width: 60px; }
.w120 { width: 120px; }

.list th {
  height: 19px;
  padding: 0 4px;
  border: 1px solid;
  border-color: #fff var(--dark) var(--dark) #fff;
  background: var(--face);
  font-size: 13px;
  font-weight: normal;
  line-height: 14px;
  text-align: left;
}

.list td {
  height: 17px;
  padding: 1px 4px 0;
  border-right: 1px solid var(--face);
  border-bottom: 1px solid var(--face);
  font-size: 12px;
  line-height: 15px;
  white-space: nowrap;
  overflow: hidden;
}

.list td.site {
  font-size: 13px;
}

.list td label {
  display: flex;
  align-items: center;
  gap: 3px;
}

.list td:first-child {
  padding-left: 3px;
}

.list input[type="checkbox"] {
  width: 13px;
  height: 13px;
  border: 2px solid #808080;
}

.scroll-h.blue {
  gap: 2px;
  padding: 0;
}

.blue.scroll-h {
  height: 16px;
}

.arrow {
  width: 16px;
  height: 15px;
  display: flex;
  align-items: center;
  justify-content: center;
  border: 1px solid var(--shadow);
  border-radius: 2px;
  background: linear-gradient(#f5f5f5, #d8d8d8);
}

.blue .thumb {
  width: 68%;
  border-color: #3c7fb1;
  background: linear-gradient(#e3f4fc, #d6eefb 50%, #a9dbf5 50%, #9bd2ef);
}

.chart {
  display: block;
  flex: 1;
  min-height: 0;
  margin-left: 5px;
  background: #fff;
}

.chart text {
  font: bold 14px "Liberation Sans", "Noto Sans CJK SC", sans-serif;
}

.trace {
  fill: none;
  shape-rendering: crispEdges;
}

/* status bar and taskbar */
.status {
  height: 21px;
  flex: none;
  display: grid;
  grid-template-columns: 105fr 166fr 356fr 166fr 206fr 166fr 405fr 14fr;
  gap: 2px;
  padding-top: 1px;
  line-height: 20px;
}

.status span {
  padding-left: 1px;
  border: 1px solid;
  border-color: var(--shadow) #fff #fff var(--shadow);
  white-space: pre;
  overflow: hidden;
}

.taskbar {
  height: 40px;
  flex: none;
  display: flex;
  border-top: 1px solid #556070;
  background: #a6c0dd;
}

.start {
  width: 59px;
  padding-right: 6px;
  border: 0;
  background: linear-gradient(90deg, #8498b0 90%, #a6c0dd);
}

.task {
  width: 59px;
  margin-right: 3px;
  display: flex;
  align-items: center;
  justify-content: center;
  border: 1px solid #4c5c70;
  border-radius: 3px;
  background: linear-gradient(135deg, #dfe8f2, #b4c7dd);
}

.tray {
  margin-left: auto;
  display: flex;
  align-items: center;
  gap: 6px;
  padding-left: 48px;
  background: linear-gradient(90deg, #a6c0dd, #8094ac 30px);
}

.tray .lang {
  align-self: flex-start;
  margin-top: 8px;
}

.tray time {
  width: 76px;
  color: #fff;
  font-size: 12px;
  line-height: 18px;
  text-align: center;
}

.show-desktop {
  width: 15px;
  border: 1px solid #3c4a5c;
  background: linear-gradient(#8a9cb2, #56687e);
}
```
